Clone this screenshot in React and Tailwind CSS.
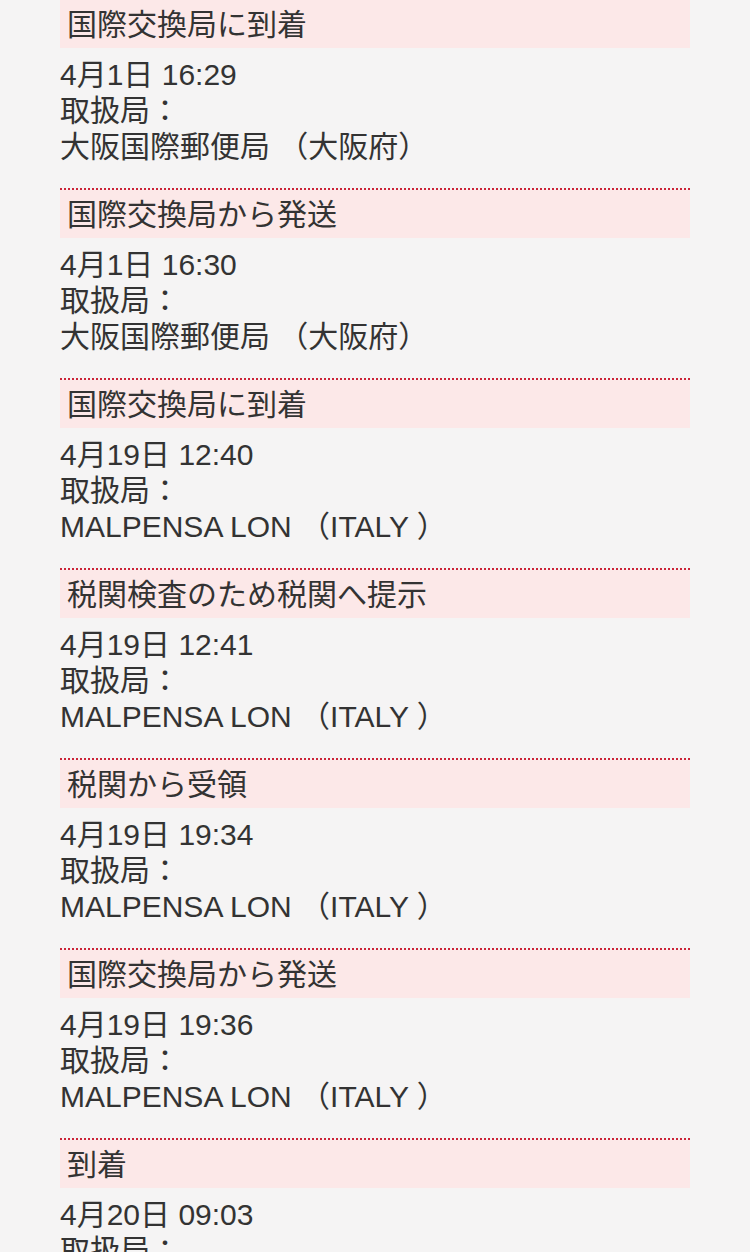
const events = [
  { status: "国際交換局に到着", time: "4月1日 16:29", office: "大阪国際郵便局 （大阪府）" },
  { status: "国際交換局から発送", time: "4月1日 16:30", office: "大阪国際郵便局 （大阪府）" },
  { status: "国際交換局に到着", time: "4月19日 12:40", office: "MALPENSA LON （ITALY ）" },
  { status: "税関検査のため税関へ提示", time: "4月19日 12:41", office: "MALPENSA LON （ITALY ）" },
  { status: "税関から受領", time: "4月19日 19:34", office: "MALPENSA LON （ITALY ）" },
  { status: "国際交換局から発送", time: "4月19日 19:36", office: "MALPENSA LON （ITALY ）" },
  { status: "到着", time: "4月20日 09:03", office: "" },
]

function EventBlock({ event }) {
  return (
    <div className="border-t-2 border-dotted border-[#cc2438]">
      <div className="flex h-[48px] items-center bg-[#fce8e8] pl-[7px]">{event.status}</div>
      <div className="mt-[9px] pb-[23px] leading-[36px]">
        <div>{event.time}</div>
        <div>取扱局：</div>
        <div>{event.office}</div>
      </div>
    </div>
  )
}

export default function App() {
  return (
    <div className="h-[1252px] overflow-hidden bg-[#f5f4f4]">
      <div
        className="mx-[60px] -mt-[2px] text-[30px] text-[#333]"
        style={{ fontFamily: '"Liberation Sans", "Noto Sans CJK JP", sans-serif' }}
      >
        {events.map((event, idx) => (
          <EventBlock key={idx} event={event} />
        ))}
      </div>
    </div>
  )
}
